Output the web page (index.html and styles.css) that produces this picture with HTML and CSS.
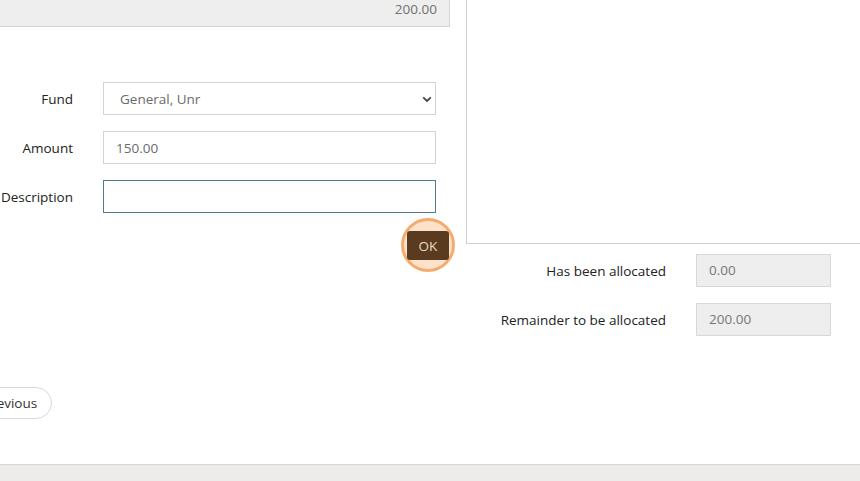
FILE: index.html
```html
<!DOCTYPE html>
<html>
<head>
<meta charset="utf-8">
<link rel="stylesheet" href="styles.css">
</head>
<body>
<div class="page">
  <div class="main">
    <div class="left">
      <div class="total">200.00</div>
      <div class="form">
        <label class="lbl">Fund</label>
        <div class="select-wrap">
          <select class="field select"><option>General, Unr</option></select>
          <svg class="chev" width="10" height="7" viewBox="0 0 10 7"><path d="M1.2 1.4 L5 5 L8.8 1.4" fill="none" stroke="#444" stroke-width="1.8"/></svg>
        </div>
        <label class="lbl">Amount</label>
        <input class="field" value="150.00">
        <label class="lbl">Description</label>
        <input class="field focus" value="">
      </div>
      <div class="ok-row">
        <div class="ok-wrap">
          <span class="halo"></span>
          <button class="ok">OK</button>
        </div>
      </div>
      <div class="nav">
        <button class="prev">Previous</button>
      </div>
    </div>
    <div class="right">
      <div class="panel"></div>
      <div class="alloc">
        <span class="lbl2">Has been allocated</span>
        <div class="ro">0.00</div>
        <span class="lbl2">Remainder to be allocated</span>
        <div class="ro">200.00</div>
      </div>
    </div>
  </div>
  <div class="footer"></div>
</div>
</body>
</html>
```

FILE: styles.css
```css
* { box-sizing: border-box; }
html, body { margin: 0; padding: 0; background: #fff; }
body {
  font-family: "Open Sans", "Liberation Sans", sans-serif;
  font-size: 13.5px;
  color: #222;
  overflow: hidden;
}
.page { width: 860px; height: 481px; display: flex; flex-direction: column; }
.main { flex: 1; display: flex; }
.left { width: 450px; display: flex; flex-direction: column; }
.total {
  height: 27px;
  background: #eeeeee;
  border-right: 1px solid #d4d4d4;
  border-bottom: 1px solid #d4d4d4;
  text-align: right;
  padding-right: 12px;
  line-height: 19px;
  color: #707070;
}
.form {
  margin-top: 55px;
  display: grid;
  grid-template-columns: 73px 333px;
  column-gap: 30px;
  row-gap: 16px;
  align-items: center;
}
.lbl { text-align: right; white-space: nowrap; color: #222; }
.field {
  width: 333px;
  height: 33px;
  border: 1px solid #d3d3d3;
  background: #fff;
  font-family: inherit;
  font-size: 13.5px;
  color: #6a6a6a;
  padding: 0 12px;
  margin: 0;
  outline: none;
}
.select-wrap { position: relative; height: 33px; }
.select { appearance: none; -webkit-appearance: none; padding-left: 16px; border-radius: 0; }
.chev { position: absolute; right: 4px; top: 14px; }
.focus { border-color: #4e7d8c; }
.ok-row { display: flex; justify-content: flex-end; margin-top: 18px; padding-right: 1px; }
.ok-wrap { position: relative; width: 42px; height: 29px; }
.halo {
  position: absolute;
  left: -6px; top: -13px;
  width: 54px; height: 54px;
  border-radius: 50%;
  border: 3px solid #f5ab6c;
  background: rgba(250, 190, 140, 0.45);
}
.ok {
  position: relative;
  width: 42px; height: 29px;
  border: none;
  border-radius: 3px;
  background: #5b3b1f;
  color: #ead9c6;
  font-family: inherit;
  font-size: 13.5px;
  padding: 0;
}
.nav { margin-top: 127px; }
.prev {
  margin-left: -35px;
  height: 32px;
  padding: 0 14px 0 17px;
  border: 1px solid #d8d8d8;
  border-radius: 16px;
  background: #fff;
  font-family: inherit;
  font-size: 13.5px;
  color: #333;
}
.right { flex: 1; margin-left: 16px; display: flex; flex-direction: column; }
.panel {
  height: 244px;
  border-left: 1px solid #cfcfcf;
  border-bottom: 1px solid #cfcfcf;
  background: #fff;
}
.alloc {
  margin-top: 10px;
  display: grid;
  grid-template-columns: 200px 135px;
  column-gap: 30px;
  row-gap: 16px;
  align-items: center;
}
.lbl2 { text-align: right; white-space: nowrap; color: #222; }
.ro {
  height: 33px;
  background: #eeeeee;
  border: 1px solid #d8d8d8;
  color: #777;
  padding: 0 12px;
  line-height: 31px;
}
.footer {
  height: 17px;
  background: #eeeceb;
  border-top: 1px solid #d8d6d5;
}
```
